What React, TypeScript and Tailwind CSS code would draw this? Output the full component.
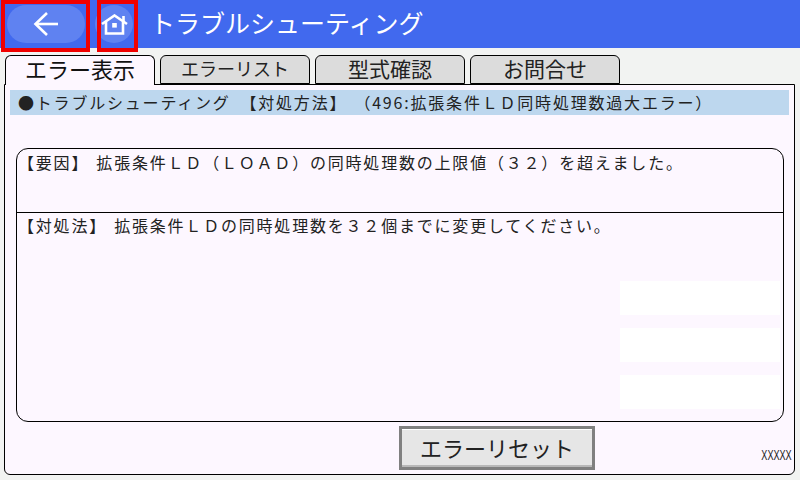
const font = { cjk: "font-['Noto_Sans_CJK_JP',sans-serif]" };

function Tab(props: { label: string; active?: boolean; big?: boolean }) {
  if (props.active) {
    return (
      <div className="relative z-10 -mb-px flex h-[30px] w-[150px] items-center justify-center rounded-t-[6px] border border-b-0 border-black bg-[#fdf7ff] pb-[5px] text-[22px] text-[#111]">
        {props.label}
      </div>
    );
  }
  return (
    <div
      className={`flex h-[29px] w-[150px] items-center justify-center rounded-t-[6px] border border-black bg-[#dcdcdc] pb-[2px] text-[#222] ${
        props.big ? "text-[21px]" : "text-[18px]"
      }`}
    >
      {props.label}
    </div>
  );
}

function BackIcon() {
  return (
    <svg width="26" height="26" viewBox="0 0 26 26" fill="none" stroke="white" strokeWidth="2.6">
      <path d="M14 2 L2.5 13 L14 24" />
      <path d="M3 13 H25" />
    </svg>
  );
}

function HomeIcon() {
  return (
    <svg width="27" height="21" viewBox="0 0 27 21" fill="none" stroke="white" strokeWidth="2.6">
      <path d="M1 10 L13.5 1.5 L26 10" />
      <path d="M22.5 2 V8" />
      <path d="M5 8 V19.5 H22 V8" />
      <rect x="11.2" y="9" width="4.6" height="4.6" fill="white" stroke="none" />
    </svg>
  );
}

export default function App() {
  return (
    <div className={`relative flex h-[480px] w-[800px] flex-col overflow-hidden bg-[#f2f3f2] ${font.cjk}`}>
      {/* ヘッダー */}
      <div className="flex h-12 shrink-0 items-center bg-[#4169ee] pl-[7px]">
        <div className="flex h-[38px] w-[78px] items-center justify-center rounded-full bg-[#5f82f1]">
          <BackIcon />
        </div>
        <div className="ml-[10px] flex h-[38px] w-[38px] items-center justify-center rounded-full bg-[#5f82f1]">
          <HomeIcon />
        </div>
        <span className="mb-[4px] ml-[17px] text-[25px] leading-none text-white">トラブルシューティング</span>
      </div>

      {/* タブ */}
      <div className="mt-[7px] flex h-[29px] shrink-0 items-end gap-[5px] pl-[5px]">
        <Tab label="エラー表示" active />
        <Tab label="エラーリスト" />
        <Tab label="型式確認" big />
        <Tab label="お問合せ" big />
      </div>

      {/* 本体 */}
      <div className="mb-[5px] ml-[4px] mr-[5px] flex min-h-0 flex-1 flex-col rounded-b-[6px] border border-black bg-[#fdf7ff] px-[5px] pt-[5px]">
        <div className="flex h-[25px] shrink-0 items-center whitespace-pre bg-[#bdd7ee] pb-[2px] pl-[8px] text-[16px] leading-none tracking-[1.8px] text-[#222]">
          ●トラブルシューティング　【対処方法】{"\u2004"}（496:拡張条件ＬＤ同時処理数過大エラー）
        </div>

        <div className="ml-[6px] mr-[5px] mt-[33px] flex h-[274px] shrink-0 flex-col rounded-[12px] border border-black text-[16px] leading-none tracking-[1.8px] text-[#222]">
          <div className="h-[64px] shrink-0 whitespace-pre border-b border-black pl-px pt-[5px]">
            【要因】{"\u2004"}拡張条件ＬＤ（ＬＯＡＤ）の同時処理数の上限値（３２）を超えました。
          </div>
          <div className="flex flex-1 flex-col">
            <div className="whitespace-pre pl-px pt-[4px]">
              【対処法】{"\u2004"}拡張条件ＬＤの同時処理数を３２個までに変更してください。
            </div>
            <div className="ml-auto mr-[3px] mt-[48px] flex w-[160px] flex-col gap-[13px]">
              <div className="h-[34px] bg-white" />
              <div className="h-[34px] bg-white" />
              <div className="h-[34px] bg-white" />
            </div>
          </div>
        </div>

        <div className="relative flex flex-1 items-start">
          <button className="ml-[389px] mt-[4px] h-[44px] w-[196px] border-[3px] border-[#808080] bg-[#e6e6e6] pb-[2px] text-[22px] leading-none text-[#222] shadow-[inset_0_1px_0_#fff,inset_0_-2px_0_#b8b8b8]">
            エラーリセット
          </button>
          <span className="absolute bottom-[12px] right-[-3px] origin-right scale-x-[0.65] font-['Liberation_Sans',sans-serif] text-[14px] leading-none text-[#222]">
            XXXXX
          </span>
        </div>
      </div>

      {/* 赤枠 */}
      <div className="absolute left-[1px] top-0 h-[52px] w-[89px] border-[4px] border-[#f00000]" />
      <div className="absolute left-[97px] top-0 h-[52px] w-[41px] border-[4px] border-[#f00000]" />
    </div>
  );
}
